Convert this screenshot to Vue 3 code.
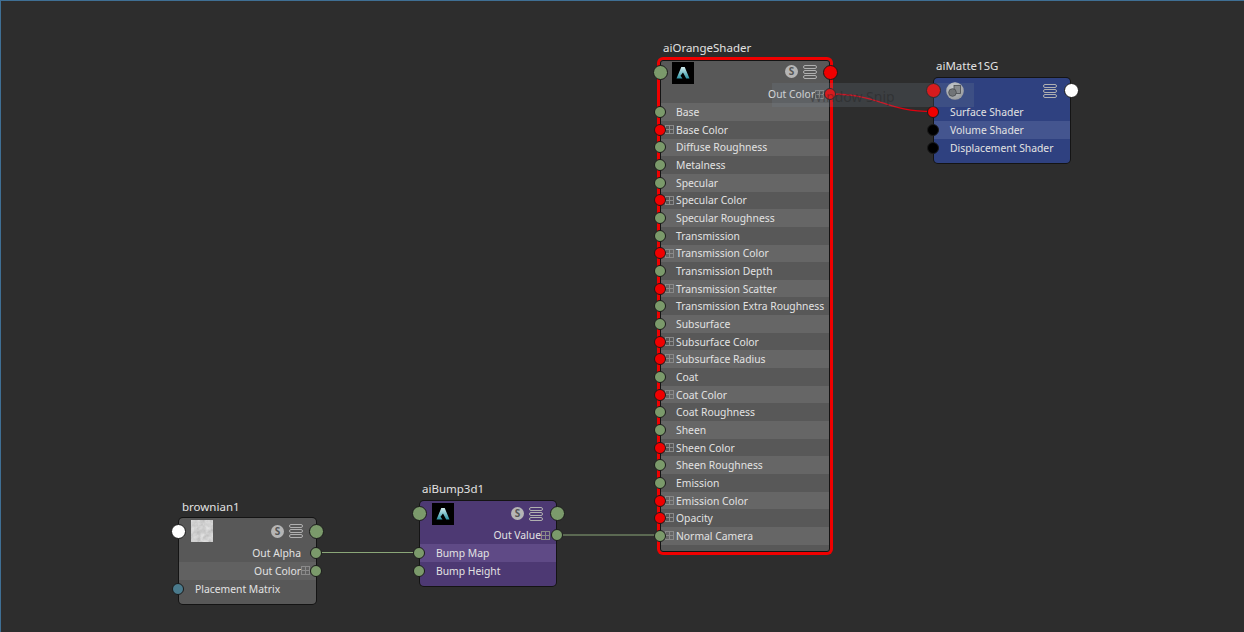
<script setup>
const R = 'red', G = 'green', W = 'white', K = 'black', B = 'blue'

const shaderAttrs = [
  ['Base', G], ['Base Color', R, 1], ['Diffuse Roughness', G], ['Metalness', G], ['Specular', G],
  ['Specular Color', R, 1], ['Specular Roughness', G], ['Transmission', G], ['Transmission Color', R, 1],
  ['Transmission Depth', G], ['Transmission Scatter', R, 1], ['Transmission Extra Roughness', G],
  ['Subsurface', G], ['Subsurface Color', R, 1], ['Subsurface Radius', R, 1], ['Coat', G], ['Coat Color', R, 1],
  ['Coat Roughness', G], ['Sheen', G], ['Sheen Color', R, 1], ['Sheen Roughness', G], ['Emission', G],
  ['Emission Color', R, 1], ['Opacity', R, 1], ['Normal Camera', G, 1]
].map(([label, port, expand]) => ({ label, port, expand }))

const nodes = [
  {
    name: 'brownian1', type: 'tex', x: 179, y: 518, w: 137, h: 86, icon: 'noise', swatch: true,
    inPort: W, outPort: G,
    rows: [
      { label: 'Out Alpha', out: true, port: G },
      { label: 'Out Color', out: true, port: G, expand: 1 },
      { label: 'Placement Matrix', port: B }
    ]
  },
  {
    name: 'aiBump3d1', type: 'bump', x: 420, y: 501, w: 136, h: 85, icon: 'arnold', swatch: true,
    inPort: G, outPort: G,
    rows: [
      { label: 'Out Value', out: true, port: G, expand: 1 },
      { label: 'Bump Map', port: G },
      { label: 'Bump Height', port: G }
    ]
  },
  {
    name: 'aiOrangeShader', type: 'shader', x: 660, y: 60, w: 170, h: 492, icon: 'arnold', swatch: true,
    inPort: G, outPort: R,
    rows: [{ label: 'Out Color', out: true, port: R, expand: 1 }, ...shaderAttrs]
  },
  {
    name: 'aiMatte1SG', type: 'sg', x: 934, y: 78, w: 136, h: 85, icon: 'sphere', swatch: false,
    inPort: R, outPort: W,
    rows: [
      { label: 'Surface Shader', port: R },
      { label: 'Volume Shader', port: K },
      { label: 'Displacement Shader', port: K }
    ]
  }
]
</script>

<template>
  <div class="canvas">
    <svg class="wires" width="1244" height="632" viewBox="0 0 1244 632">
      <path d="M316 552.5H420" stroke="#8aa678" fill="none" />
      <path d="M557 535H659" stroke="#8aa678" fill="none" />
      <path d="M830 94C880 94 885 111.500 933 111.500" stroke="#e0000f" stroke-width="1.300" fill="none" />
    </svg>

    <div
      v-for="n in nodes"
      :key="n.name"
      class="node"
      :class="n.type"
      :style="{ left: n.x + 'px', top: n.y + 'px', width: n.w + 'px', height: n.h + 'px' }"
    >
      <div class="title">{{ n.name }}</div>
      <div class="head">
        <span class="port big" :class="n.inPort"></span>
        <span v-if="n.icon === 'noise'" class="thumb">
          <svg width="22" height="22" viewBox="0 0 22 22">
            <filter id="grain" x="0" y="0" width="100%" height="100%">
              <feTurbulence type="fractalNoise" baseFrequency="0.2" numOctaves="3" seed="4" />
              <feColorMatrix type="matrix" values="0.3 0.3 0 0 0.33  0.3 0.3 0 0 0.33  0.3 0.3 0 0 0.33  0 0 0 0 1" />
            </filter>
            <rect width="22" height="22" filter="url(#grain)" />
          </svg>
        </span>
        <span v-else-if="n.icon === 'arnold'" class="thumb logo">
          <svg width="22" height="22" viewBox="0 0 22 22">
            <defs>
              <linearGradient id="arn" x1="0" y1="0" x2="0" y2="1">
                <stop offset="0" stop-color="#d4eff0" />
                <stop offset="1" stop-color="#2c94a4" />
              </linearGradient>
            </defs>
            <path d="M9.300 5h3.400L17.500 16.500h-3.300L11 10.500 8.500 13.800 10.500 16.500H4.500z" fill="url(#arn)" />
          </svg>
        </span>
        <span v-else class="thumb sphere">
          <svg width="18" height="18" viewBox="0 0 18 18">
            <defs>
              <radialGradient id="ball" cx="0.4" cy="0.3" r="0.8">
                <stop offset="0" stop-color="#dcdcdc" />
                <stop offset="1" stop-color="#9a9a9a" />
              </radialGradient>
            </defs>
            <circle cx="9" cy="9" r="8.800" fill="url(#ball)" />
            <rect x="8" y="3.500" width="6.500" height="8" fill="#8c8c8c" stroke="#3c3c3c" stroke-width=".8" />
            <circle cx="6.500" cy="10.500" r="3.800" fill="#707070" stroke="#3c3c3c" stroke-width=".8" />
          </svg>
        </span>
        <span class="spacer"></span>
        <span v-if="n.swatch" class="sbtn">S</span>
        <span class="menu"><i></i><i></i><i></i></span>
        <span class="port big right" :class="n.outPort"></span>
      </div>
      <div class="rows">
        <div v-for="r in n.rows" :key="r.label" class="row" :class="{ out: r.out }">
          <span class="port" :class="[r.port, { right: r.out }]"></span>
          <span v-if="r.expand" class="plus"></span>
          <span class="label">{{ r.label }}</span>
        </div>
      </div>
    </div>

    <div class="snip"><span>Window Snip</span></div>
  </div>
</template>

<style>
html, body {
  margin: 0;
  background: #2d2d2d;
}
</style>

<style scoped>
.canvas {
  position: relative;
  width: 1244px;
  height: 632px;
  overflow: hidden;
  box-sizing: border-box;
  background: #2d2d2d;
  border-top: 1px solid #3f6f94;
  border-left: 1px solid #3f6f94;
  font-family: "Noto Sans", "Open Sans", sans-serif;
  font-size: 10.35px;
  color: #e2e2e2;
}

.wires {
  position: absolute;
  left: -1px;
  top: -1px;
}

.node {
  position: absolute;
  margin: -1px 0 0 -1px;
  box-sizing: border-box;
  border-radius: 4px;
  box-shadow: 0 0 0 1px #141414;
  display: flex;
  flex-direction: column;
}

.shader {
  box-shadow: 0 0 0 3px #f00000;
  border-radius: 3px;
}

/* dark line just inside the red selection frame */
.shader::after {
  content: "";
  position: absolute;
  inset: 0;
  border: 1px solid #141414;
  border-radius: 3px;
  pointer-events: none;
}

.tex { --row: #616161; background: #585858; }
.shader { --row: #666666; background: #585858; }
.bump { --row: #5f4a86; background: #4d3973; }
.sg { --row: #44558f; background: #2f4180; }

.title {
  position: absolute;
  left: 2px;
  top: -20px;
  font-size: 11.5px;
  line-height: 16px;
  white-space: nowrap;
}

.tex .title {
  left: 3px;
  top: -19px;
}

.shader .title {
  left: 3px;
}

.head {
  position: relative;
  height: 25.5px;
  flex: none;
  display: flex;
  align-items: center;
  padding: 0 13px;
}

.tex .head {
  height: 26.5px;
}

.shader .head {
  height: 25.6px;
}

.thumb {
  width: 22px;
  height: 22px;
  flex: none;
  margin-left: -1px;
  overflow: hidden;
}

.logo {
  background: #000;
}

.sphere {
  width: 18px;
  height: 18px;
}

.spacer {
  flex: 1;
}

.sbtn {
  width: 13px;
  height: 13px;
  border-radius: 50%;
  background: #b5b5b5;
  color: #555;
  font-size: 10px;
  font-weight: 700;
  line-height: 13px;
  text-align: center;
  margin-right: 5px;
}

.menu {
  display: flex;
  flex-direction: column;
  gap: 1px;
  width: 14px;
}

.menu i {
  display: block;
  height: 4px;
  border: 1px solid #b0b0b0;
  border-radius: 2px;
  box-sizing: border-box;
}

.rows {
  display: flex;
  flex-direction: column;
}

.row {
  position: relative;
  height: 17.67px;
  flex: none;
  display: flex;
  align-items: center;
  padding-left: 16px;
  line-height: 16px;
  white-space: nowrap;
}

.row:nth-child(even) {
  background: var(--row);
}

.plus {
  position: absolute;
  left: 5px;
  top: 4px;
  width: 9px;
  height: 9px;
  box-sizing: border-box;
  border: 1px solid #8a8a8a;
  background:
    linear-gradient(#8a8a8a, #8a8a8a) center / 100% 1px no-repeat,
    linear-gradient(#8a8a8a, #8a8a8a) center / 1px 100% no-repeat;
}

.row.out {
  justify-content: flex-end;
  padding: 0 15px 0 0;
}

.row.out .plus {
  left: auto;
  right: 6px;
}

.port {
  position: absolute;
  left: -7px;
  top: 50%;
  width: 10px;
  height: 10px;
  margin-top: -6px;
  border: 1px solid #1a1a1a;
  border-radius: 50%;
  z-index: 2;
}

.shader .port {
  left: -6px;
}

.port.right,
.shader .port.right {
  left: auto;
  right: -6px;
}

.bump .port.right {
  right: -7px;
}

.port.big {
  width: 13px;
  height: 13px;
  margin-top: -7.5px;
  left: -8.5px;
}

.shader .port.big {
  left: -7.5px;
  margin-top: -8px;
}

.port.big.right,
.shader .port.big.right {
  left: auto;
  right: -7.5px;
}

.bump .port.big.right,
.sg .port.big.right {
  right: -8.5px;
}

.shader .sbtn,
.shader .menu {
  margin-top: -2px;
}

.green { background: #7b9a6b; }
.red { background: #f00000; }
.white { background: #ffffff; }
.black { background: #000000; }
.blue { background: #4a7a8c; }

.snip {
  position: absolute;
  left: 771px;
  top: 82px;
  width: 202px;
  height: 24px;
  background: rgba(120, 135, 150, 0.2);
  color: rgba(30, 30, 30, 0.38);
  font-size: 14px;
  line-height: 28px;
  text-align: center;
  z-index: 3;
}

.snip span {
  margin-left: -42px;
}
</style>
